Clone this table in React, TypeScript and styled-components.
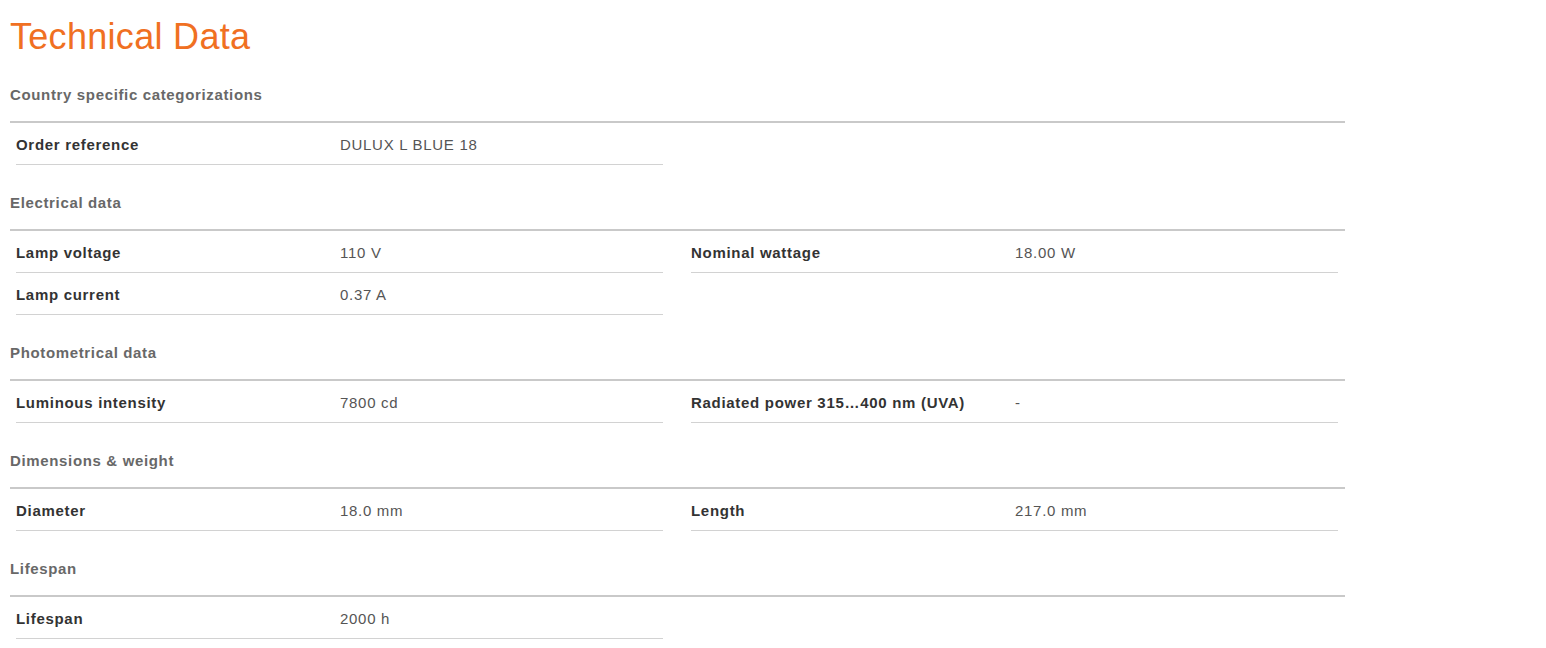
import React from 'react'
import styled, { createGlobalStyle } from 'styled-components'

const GlobalStyle = createGlobalStyle`
	body {
		margin: 0;
		background: #ffffff;
		font-family: 'Liberation Sans', Arial, sans-serif;
	}
`

type Item = { label: string, value: string }
type Section = { title: string, items: Item[] }

const sections: Section[] = [
	{ title: 'Country specific categorizations', items: [{ label: 'Order reference', value: 'DULUX L BLUE 18' }] },
	{
		title: 'Electrical data',
		items: [
			{ label: 'Lamp voltage', value: '110 V' },
			{ label: 'Nominal wattage', value: '18.00 W' },
			{ label: 'Lamp current', value: '0.37 A' },
		],
	},
	{
		title: 'Photometrical data',
		items: [
			{ label: 'Luminous intensity', value: '7800 cd' },
			{ label: 'Radiated power 315…400 nm (UVA)', value: '-' },
		],
	},
	{
		title: 'Dimensions & weight',
		items: [
			{ label: 'Diameter', value: '18.0 mm' },
			{ label: 'Length', value: '217.0 mm' },
		],
	},
	{ title: 'Lifespan', items: [{ label: 'Lifespan', value: '2000 h' }] },
]

const App = () => {
	return (
		<Page>
			<GlobalStyle />
			<Title>Technical Data</Title>
			{sections.map(section => (
				<div key={section.title}>
					<SectionTitle>{section.title}</SectionTitle>
					<Grid>
						{section.items.map(item => (
							<Row key={item.label}>
								<Label>{item.label}</Label>
								<Value>{item.value}</Value>
							</Row>
						))}
					</Grid>
				</div>
			))}
		</Page>
	)
}

const Page = styled.div`
	padding: 0 10px;
	width: 1335px;
`

const Title = styled.h1`
	margin: 19px 0 0;
	font-size: 36px;
	line-height: 36px;
	font-weight: 400;
	color: #f07022;
	letter-spacing: 0.3px;
`

const SectionTitle = styled.h3`
	margin: 30px 0 16px;
	font-size: 15px;
	line-height: 20px;
	font-weight: 700;
	color: #686868;
	letter-spacing: 0.65px;

	div + div & {
		margin-top: 28px;
	}
`

const Grid = styled.div`
	display: grid;
	grid-template-columns: 1fr 1fr;
	column-gap: 28px;
	padding: 0 7px 0 6px;
	border-top: 2px solid #c9c9c9;
`

const Row = styled.div`
	display: grid;
	grid-template-columns: 324px 1fr;
	padding: 12px 0 10px;
	line-height: 19px;
	font-size: 15px;
	letter-spacing: 0.7px;
	border-bottom: 1px solid #d2d2d2;
`

const Label = styled.span`
	font-weight: 700;
	color: #333333;
`

const Value = styled.span`
	color: #555555;
`

export default App
